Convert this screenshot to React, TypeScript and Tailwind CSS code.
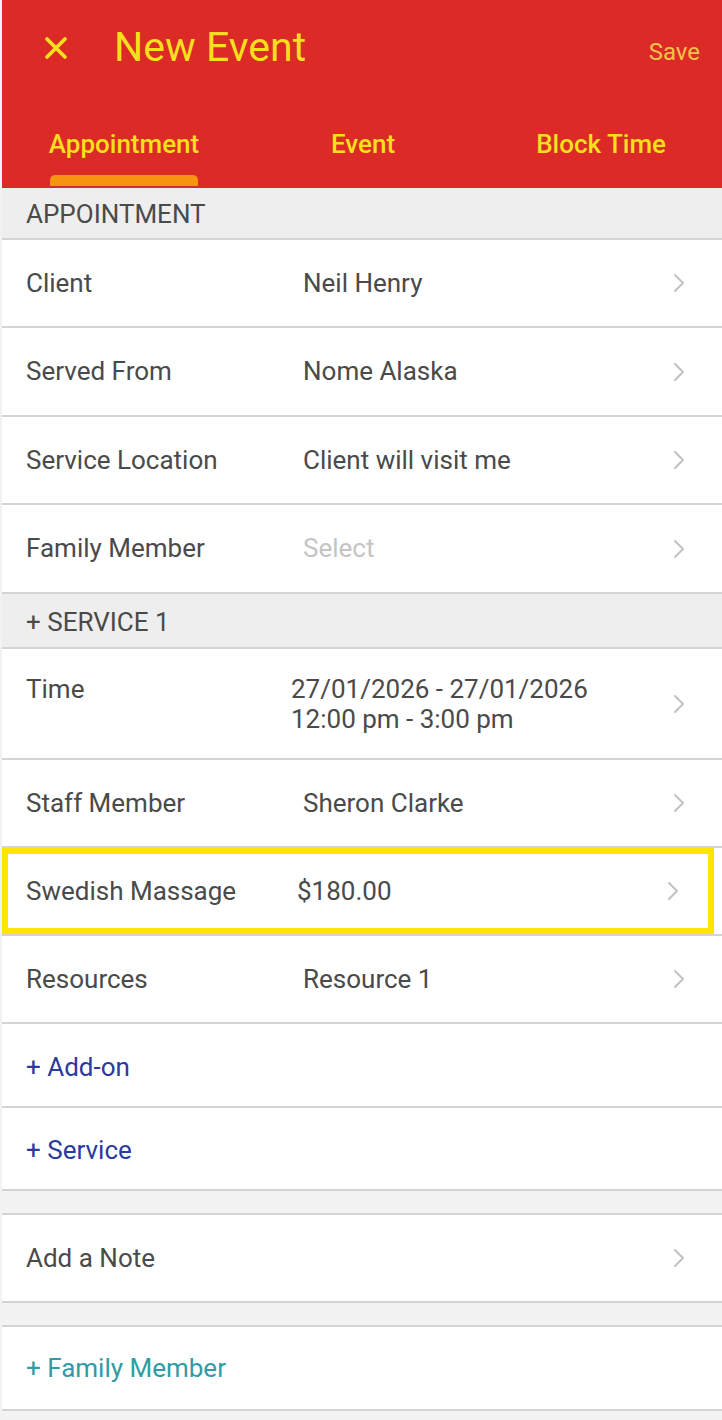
import { X } from "lucide-react"

type Row = { label: string; value?: string; placeholder?: boolean; tall?: boolean }

const appointmentRows: Row[] = [
  { label: "Client", value: "Neil Henry" },
  { label: "Served From", value: "Nome Alaska", tall: true },
  { label: "Service Location", value: "Client will visit me" },
  { label: "Family Member", value: "Select", placeholder: true, tall: true },
]

function Chevron() {
  return (
    <svg width="14" height="22" viewBox="0 0 14 22" className="text-[#c2c2c2]">
      <path d="M3 3l8 8-8 8" fill="none" stroke="currentColor" strokeWidth="2" strokeLinecap="round" strokeLinejoin="round" />
    </svg>
  )
}

function FormRow({ row }: { row: Row }) {
  return (
    <div
      className={`flex items-center border-b-2 border-[#d4d4d4] bg-white pl-6 pr-[36px] ${row.tall ? "h-[89px]" : "h-[88px]"}`}
    >
      <span className="w-[277px] text-[26px] text-[#4a4a4a]">{row.label}</span>
      <span className={`flex-1 text-[26px] ${row.placeholder ? "text-[#c4c4c4]" : "text-[#4a4a4a]"}`}>
        {row.value}
      </span>
      <Chevron />
    </div>
  )
}

function SectionHeader({ title, height }: { title: string; height: string }) {
  return (
    <div className={`flex items-center border-b-2 border-[#d4d4d4] bg-[#eeeeee] pl-6 pt-[3px] text-[26px] text-[#4a4a4a] ${height}`}>
      {title}
    </div>
  )
}

export default function App() {
  return (
    <div className="min-h-[1420px] bg-[#f2f2f2] pl-[2px]" style={{ fontFamily: "Roboto, 'Noto Sans', sans-serif" }}>
      {/* header */}
      <div className="h-[188px] bg-[#dc2a27]">
        <div className="flex h-[96px] items-center pl-[36px] pr-[22px]">
          <X className="h-9 w-9 text-[#f7df1e]" strokeWidth={2.5} />
          <span className="ml-[40px] text-[41px] text-[#f7df1e]">New Event</span>
          <span className="ml-auto mt-[8px] text-[24px] text-[#f4c24a]">Save</span>
        </div>
        <div className="flex h-[92px] items-start">
          <div className="ml-[44px] flex w-[156px] flex-col items-center">
            <span className="mt-[29px] text-[26px] font-medium text-[#f7df1e]">Appointment</span>
            <div className="mt-[11px] h-[11px] w-[148px] rounded-t-[5px] bg-[#f7940f]" />
          </div>
          <span className="ml-[129px] mt-[29px] text-[26px] font-medium text-[#f7df1e]">Event</span>
          <span className="ml-[141px] mt-[29px] text-[26px] font-medium text-[#f7df1e]">Block Time</span>
        </div>
      </div>

      <SectionHeader title="APPOINTMENT" height="h-[52px]" />
      {appointmentRows.map((r) => (
        <FormRow key={r.label} row={r} />
      ))}

      <SectionHeader title="+ SERVICE 1" height="h-[55px]" />

      <div className="flex h-[111px] items-start border-b-2 border-[#d4d4d4] bg-white pl-6 pr-[36px] pt-[25px]">
        <span className="w-[265px] text-[26px] leading-[30px] text-[#4a4a4a]">Time</span>
        <div className="flex-1 text-[26px] leading-[30px] text-[#4a4a4a]">
          <div>27/01/2026 - 27/01/2026</div>
          <div>12:00 pm - 3:00 pm</div>
        </div>
        <div className="mt-[19px]">
          <Chevron />
        </div>
      </div>

      <FormRow row={{ label: "Staff Member", value: "Sheron Clarke" }} />

      <div className="border-b-2 border-[#d4d4d4] bg-white pr-[8px]">
        <div className="flex h-[86px] items-center border-[6px] border-[#ffe500] pl-[18px] pr-[28px]">
          <span className="w-[271px] text-[26px] text-[#4a4a4a]">Swedish Massage</span>
          <span className="flex-1 text-[26px] text-[#4a4a4a]">$180.00</span>
          <Chevron />
        </div>
      </div>

      <FormRow row={{ label: "Resources", value: "Resource 1" }} />

      <div className="flex h-[84px] items-center border-b-2 border-[#d4d4d4] bg-white pl-6 pt-[4px] text-[26px] text-[#2b3a9e]">
        + Add-on
      </div>
      <div className="flex h-[83px] items-center border-b-2 border-[#d4d4d4] bg-white pl-6 pt-[4px] text-[26px] text-[#2b3a9e]">
        + Service
      </div>

      <div className="h-[24px] border-b-2 border-[#d4d4d4] bg-[#f2f2f2]" />

      <div className="flex h-[88px] items-center border-b-2 border-[#d4d4d4] bg-white pl-6 pr-[36px]">
        <span className="flex-1 text-[26px] text-[#4a4a4a]">Add a Note</span>
        <Chevron />
      </div>

      <div className="h-[24px] border-b-2 border-[#d4d4d4] bg-[#f2f2f2]" />

      <div className="flex h-[84px] items-center border-b-2 border-[#d4d4d4] bg-white pl-6 text-[26px] text-[#2f9ca6]">
        + Family Member
      </div>
    </div>
  )
}
